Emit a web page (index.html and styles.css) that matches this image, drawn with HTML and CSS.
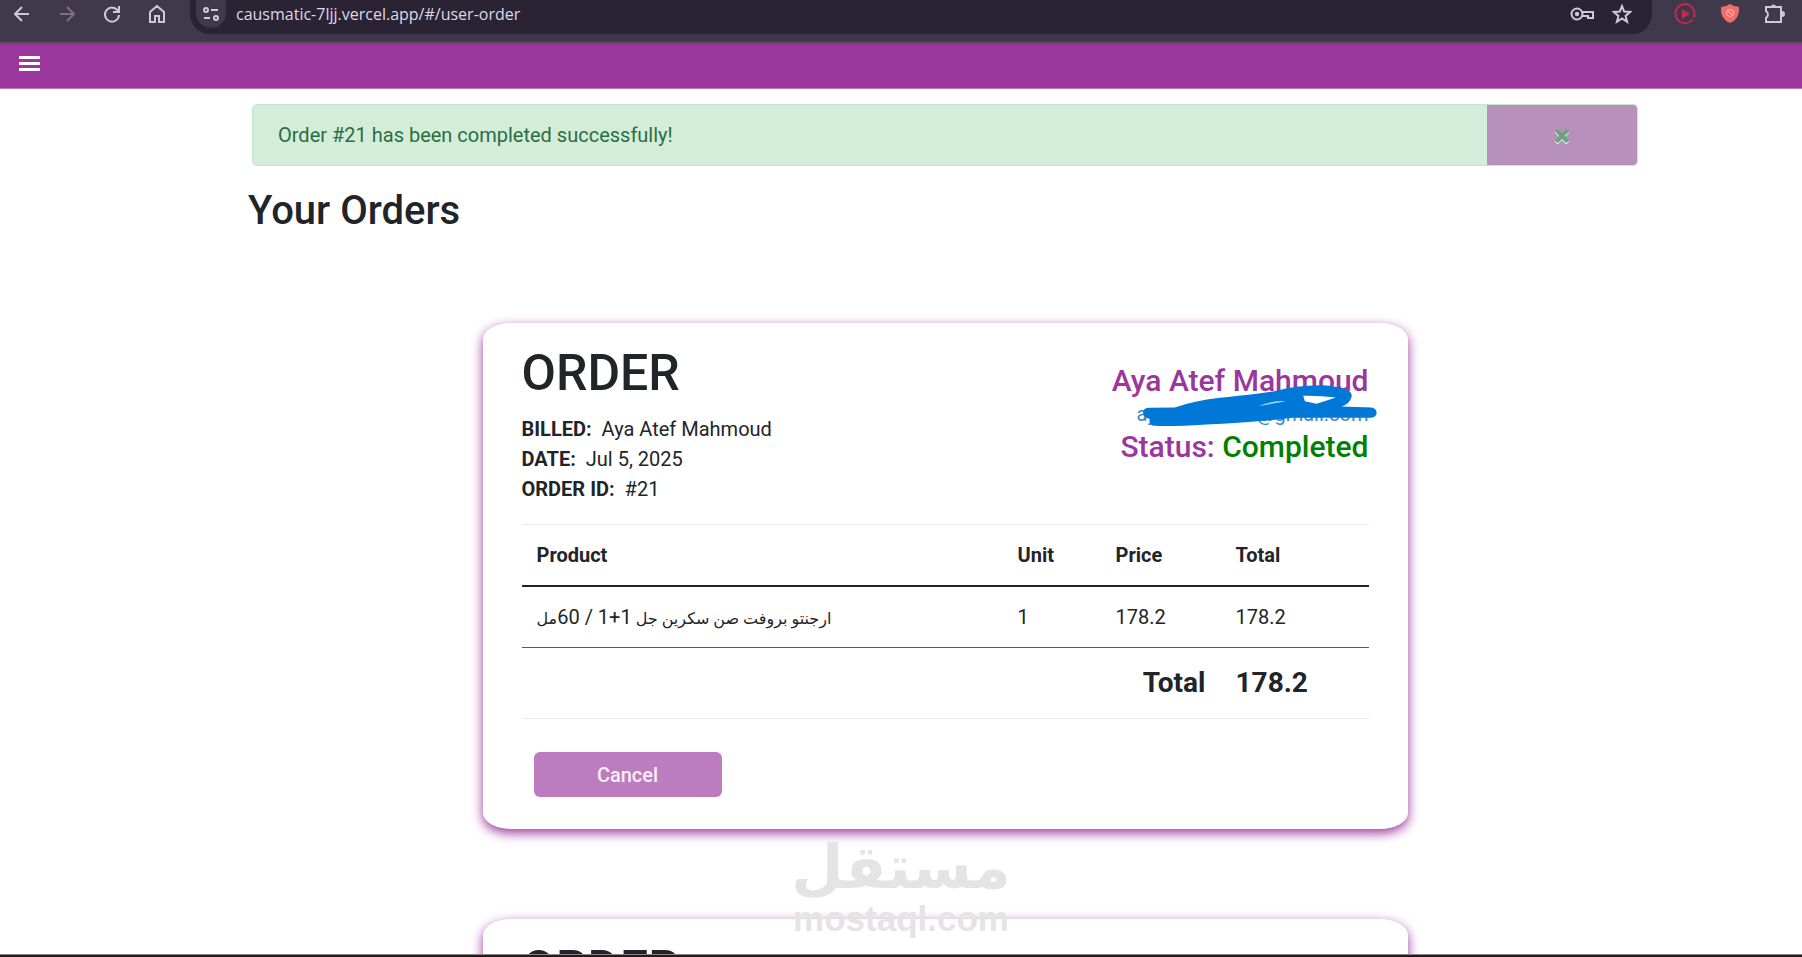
FILE: index.html
```html
<!DOCTYPE html>
<html lang="en">
    <head>
        <title>Your Orders</title>
        <meta charset="utf-8"/>
        <link rel="stylesheet" href="styles.css">
    </head>
    <body>
        <div class="toolbar">
            <div class="nav-icons">
                <button class="tool" aria-label="Back"><svg width="16" height="18" viewBox="0 0 16 18"><path d="M15 9H1M8 2L1 9l7 7"/></svg></button>
                <button class="tool off" aria-label="Forward"><svg width="16" height="18" viewBox="0 0 16 18"><path d="M1 9h14M8 2l7 7-7 7"/></svg></button>
                <button class="tool" aria-label="Reload"><svg width="16" height="18" viewBox="0 0 16 18"><path d="M14 6A7 7 0 1 0 15 10M15 1v6H9"/></svg></button>
                <button class="tool" aria-label="Home"><svg width="16" height="18" viewBox="0 0 16 18"><path d="M1 7l7-6 7 6v10h-5v-6H6v6H1z"/></svg></button>
            </div>
            <div class="address">
                <button class="site" aria-label="Site information"><svg width="18" height="16" viewBox="0 0 18 16"><circle cx="4" cy="4" r="2"/><path d="M9 4h7M2 12h6"/><circle cx="14" cy="12" r="2"/></svg></button>
                <input class="url" type="text" aria-label="Address" value="causmatic-7ljj.vercel.app/#/user-order">
                <button class="tool key" aria-label="Passwords"><svg width="24" height="14" viewBox="0 0 24 14"><circle cx="7" cy="7" r="5.5"/><circle class="dot" cx="7" cy="7" r="2.2"/><path d="M12 5h11v6h-5V9h-6"/></svg></button>
                <button class="tool" aria-label="Bookmark"><svg width="20" height="20" viewBox="0 0 20 20"><path d="M10 2l2.2 5.6 6 .4-4.600 3.900 1.500 5.900-5.100-3.300-5.100 3.300 1.500-5.900L1.800 8l6-.4z"/></svg></button>
            </div>
            <div class="extensions">
                <button class="tool" aria-label="Player"><svg width="22" height="22" viewBox="0 0 22 22"><path stroke="#c4284f" d="M18.500 16.500A9.500 9.500 0 1 1 20.500 11q0 2-.8 3.700"/><path fill="#c4284f" stroke="none" d="M8 6l8 5-8 5z"/></svg></button>
                <button class="tool" aria-label="Blocker"><svg width="22" height="22" viewBox="0 0 22 22"><path fill="#f36b6b" stroke="none" d="M11 1q4 3 9 3 1 12-9 16Q1 16 2 4q5 0 9-3z"/><circle class="ban" cx="11" cy="10" r="3.500"/><path class="ban" d="M8.500 7.500l5 5"/></svg></button>
                <button class="tool" aria-label="Extensions"><svg width="22" height="22" viewBox="0 0 22 22"><path d="M2 4h15v15H2v-4q4-3.500 0-7z"/><path class="dot" d="M7 4a2.500 2.500 0 0 1 5 0zM18 8a3 3 0 0 1 0 6z"/></svg></button>
            </div>
        </div>
        <nav class="navbar">
            <button class="menu" aria-label="Menu"><span></span><span></span><span></span></button>
        </nav>
        <main class="page">
            <div class="alert" role="alert">
                <p>Order #21 has been completed successfully!</p>
                <button class="close" aria-label="Close">×</button>
            </div>
            <h2 class="title">Your Orders</h2>
            <section class="card">
                <div class="head">
                    <div class="billing">
                        <h1>ORDER</h1>
                        <p><b>BILLED:</b> Aya Atef Mahmoud</p>
                        <p><b>DATE:</b> Jul 5, 2025</p>
                        <p><b>ORDER ID:</b> #21</p>
                    </div>
                    <div class="customer">
                        <h3>Aya Atef Mahmoud</h3>
                        <div class="mail">
                            <a href="#"><span class="user">ay</span>@gmail.com</a>
                            <svg class="scribble" width="247" height="47" viewBox="220 215 740 140">
                                <path fill-rule="evenodd" d="M250 308Q250 292 270 292L345 291Q400 272 480 262Q590 250 640 243Q720 222 800 225Q880 232 875 258Q870 280 845 288L935 291Q950 294 950 308Q948 321 930 322L700 322Q560 338 440 342Q340 348 285 346Q266 344 270 325Q252 322 250 308zM730 256L735 272L770 280L828 261Q780 255 730 256z"/>
                                <path class="gap" d="M595 287Q635 270 677 272Q640 279 595 287z"/>
                            </svg>
                        </div>
                        <h3>Status: <span class="done">Completed</span></h3>
                    </div>
                </div>
                <table class="items">
                    <thead>
                        <tr><th>Product</th><th class="unit">Unit</th><th class="price">Price</th><th class="sum">Total</th></tr>
                    </thead>
                    <tbody>
                        <tr><td><bdi class="name" lang="ar">ارجنتو بروفت صن سكرين جل <span>1+1 / 60</span>مل</bdi></td><td>1</td><td>178.2</td><td>178.2</td></tr>
                    </tbody>
                    <tfoot>
                        <tr><td colspan="3" class="right">Total</td><td>178.2</td></tr>
                    </tfoot>
                </table>
                <button class="cancel">Cancel</button>
            </section>
            <section class="card">
                <div class="head">
                    <div class="billing">
                        <h1>ORDER</h1>
                    </div>
                </div>
            </section>
        </main>
        <div class="watermark">
            <span class="ar" lang="ar" dir="rtl">مستقل</span>
            <span class="en">mostaql.com</span>
        </div>
        <div class="taskbar"></div>
    </body>
</html>
```
FILE: styles.css
```css
*{
    margin: 0;
    padding: 0;
    box-sizing: border-box;
}
body{
    height: 100vh;
    display: flex;
    flex-direction: column;
    position: relative;
    overflow: hidden;
    background-color: #fff;
    color: #212529;
    font: 20px/30px Roboto, "DejaVu Sans", sans-serif;
}
button{
    border: none;
    background: none;
    font-family: inherit;
    cursor: pointer;
}
svg{
    display: block;
}
/* browser bar */
.toolbar{
    flex: none;
    height: 44px;
    display: flex;
    align-items: flex-start;
    background-color: #40384b;
    border-bottom: 2px solid #55505a;
}
.toolbar svg{
    fill: none;
    stroke: #cfc8d8;
    stroke-width: 2;
}
.toolbar .dot{
    fill: #cfc8d8;
    stroke: none;
}
.toolbar .ban{
    stroke: #ffc0c0;
    stroke-width: 1;
}
.nav-icons{
    width: 190px;
    height: 28px;
    padding-left: 14px;
    display: flex;
    gap: 29px;
    align-items: center;
}
.off{
    opacity: .4;
}
.address{
    flex: 1;
    height: 34px;
    padding: 0 20px 6px 6px;
    display: flex;
    align-items: center;
    background-color: #2a2334;
    border-radius: 0 0 20px 20px;
}
.site{
    width: 30px;
    height: 28px;
    padding-left: 6px;
    background-color: #40384b;
    border-radius: 0 0 15px 15px;
}
.url{
    flex: 1;
    padding-left: 10px;
    border: none;
    background: none;
    color: #ddd8e4;
    font: 16px/28px "Open Sans", sans-serif;
    outline: none;
}
.key{
    margin-right: 18px;
}
.extensions{
    width: 150px;
    height: 28px;
    padding-left: 22px;
    display: flex;
    gap: 23px;
    align-items: center;
}
/* navbar */
.navbar{
    flex: none;
    height: 45px;
    padding: 12px 19px;
    border-bottom: 1px solid #bc7bbd;
    background-color: #9b369d;
}
.menu{
    width: 21px;
    display: flex;
    flex-direction: column;
    gap: 3px;
}
.menu span{
    height: 3px;
    background-color: #fff;
}
/* orders */
.page{
    flex: 1;
    min-height: 0;
    overflow: hidden;
    padding: 15px 0 0 88px;
}
.alert{
    max-width: 1386px;
    height: 62px;
    margin: 0 auto;
    padding-left: 25px;
    display: flex;
    align-items: center;
    justify-content: space-between;
    border: 1px solid #c3e6cb;
    border-radius: 5px;
    background-color: #d4edda;
    color: #2b6e40;
}
.close{
    align-self: stretch;
    width: 150px;
    background-color: #b890bc;
    color: #6ba37c;
    font-size: 30px;
    font-weight: 900;
    text-shadow: 0 1px 0 #fff;
    border-radius: 0 4px 4px 0;
}
.title{
    max-width: 1394px;
    margin: 21px auto 88px;
    font-size: 40px;
    line-height: 48px;
    font-weight: 500;
}
.card{
    max-width: 925px;
    margin: 0 auto 90px;
    padding: 20px 39px 32px;
    border-radius: 28px / 16px;
    background-color: #fff;
    box-shadow: 0 4px 12px #9b369d;
}
.head{
    display: flex;
    justify-content: space-between;
    padding-bottom: 20px;
}
.billing h1{
    margin-bottom: 11px;
    font-size: 50px;
    line-height: 60px;
    font-weight: 500;
}
.billing b{
    margin-right: 5px;
}
.customer{
    padding-top: 20px;
    text-align: right;
}
.customer h3{
    color: #9b369d;
    font-size: 30px;
    line-height: 36px;
    font-weight: 500;
}
.customer .done{
    color: #008000;
}
.mail{
    position: relative;
}
.mail a{
    color: #3989c6;
    text-decoration: none;
}
.mail .user{
    display: inline-block;
    width: 120px;
    text-align: left;
}
.scribble{
    position: absolute;
    right: -11px;
    top: -17px;
    fill: #0078d7;
}
.scribble .gap{
    fill: #a5d4ee;
}
.items{
    width: 100%;
    border-collapse: collapse;
    border-top: 1px solid #e9ecef;
    border-bottom: 1px solid #e9ecef;
    text-align: left;
}
.items th,.items td{
    padding: 15px;
}
.items thead{
    border-bottom: 2px solid #212529;
}
.items tbody{
    border-bottom: 1px solid #55585c;
}
.items .name{
    font-size: 16px;
    line-height: 20px;
}
.items .name span{
    font-size: 20px;
}
.items .unit{
    width: 98px;
}
.items .price{
    width: 120px;
}
.items .sum{
    width: 148px;
}
.items tfoot td{
    font-size: 28px;
    line-height: 40px;
    font-weight: 700;
}
.items .right{
    text-align: right;
}
.cancel{
    width: 188px;
    height: 45px;
    margin: 33px 12px 0;
    display: block;
    border-radius: 6px;
    background-color: #bd7bc0;
    color: #f9eefa;
    font-size: 20px;
    font-weight: 500;
}
/* watermark over the page */
.watermark{
    position: absolute;
    left: 50%;
    top: 833px;
    transform: translateX(-50%);
    display: flex;
    flex-direction: column;
    align-items: center;
    color: #e4e4e5;
    font-weight: 700;
}
.watermark .ar{
    font-family: "DejaVu Sans", sans-serif;
    font-size: 60px;
    line-height: 68px;
}
.watermark .en{
    font-family: "Liberation Sans", sans-serif;
    font-size: 35px;
    line-height: 35px;
}
.taskbar{
    flex: none;
    height: 3px;
    border-top: 1px solid #8d8688;
    background-color: #241a1c;
}
```
